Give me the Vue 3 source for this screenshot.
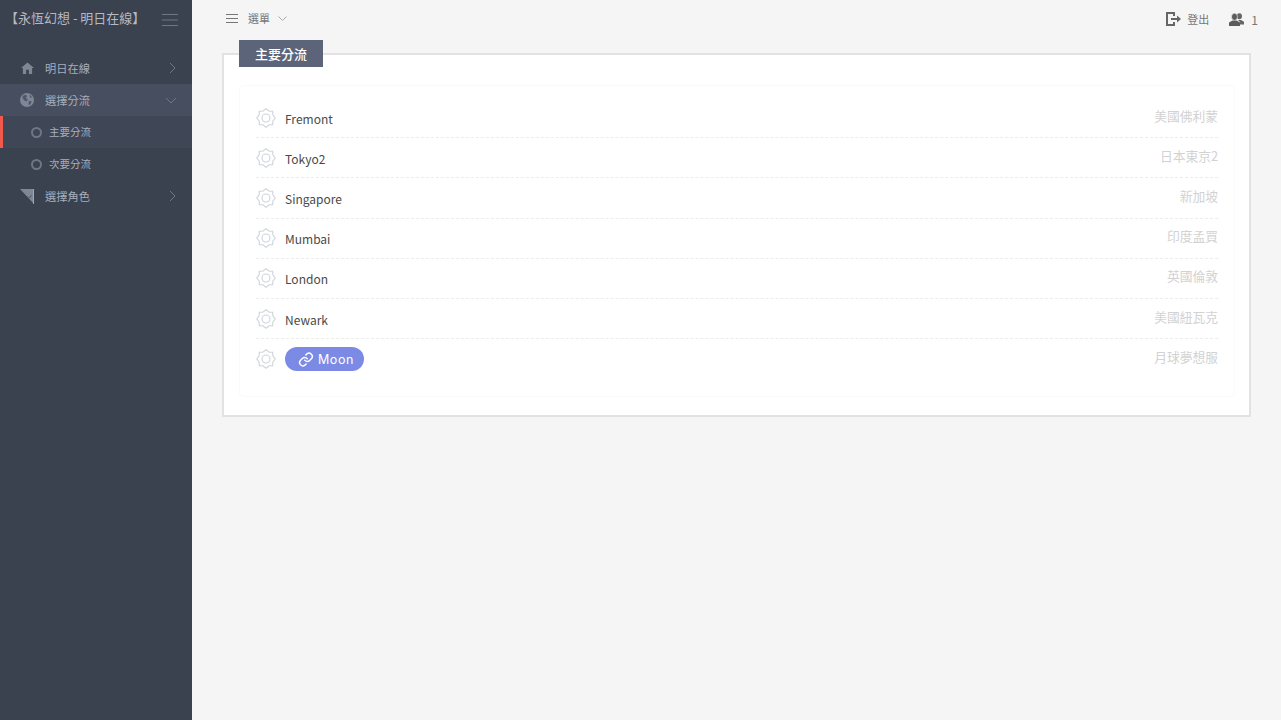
<script setup>
const rows = [
  { name: 'Fremont', place: '美國佛利蒙' },
  { name: 'Tokyo2', place: '日本東京2' },
  { name: 'Singapore', place: '新加坡' },
  { name: 'Mumbai', place: '印度孟買' },
  { name: 'London', place: '英國倫敦' },
  { name: 'Newark', place: '美國紐瓦克' },
  { name: 'Moon', place: '月球夢想服', pill: true },
]
const gear = 'M10 .8 L13.200 3.200 L16.700 3.300 L16.800 6.800 L19.200 10 L16.800 13.200 L16.700 16.700 L13.200 16.800 L10 19.200 L6.800 16.800 L3.300 16.700 L3.200 13.200 L.8 10 L3.200 6.800 L3.300 3.300 L6.800 3.200 Z'
</script>

<template>
  <div class="page">
    <aside class="side">
      <div class="brand">
        <span class="brand-text">【永恆幻想 - 明日在線】</span>
        <svg class="burger" width="16" height="12" viewBox="0 0 16 12"><path d="M0 .5H16M0 6H16M0 11.500H16" stroke="#6f7684" fill="none"/></svg>
      </div>
      <nav class="menu">
        <div class="item">
          <span class="ico-box"><svg width="13" height="12" viewBox="0 0 14 13"><path d="M7 .5 L14 6.500 H12 V13 H8.500 V8.500 H5.500 V13 H2 V6.500 H0 Z" fill="#7f8797"/></svg></span>
          <span class="label">明日在線</span>
          <svg class="arrow" width="7" height="12" viewBox="0 0 7 12"><path d="M1 1L6 6L1 11" stroke="#6f7684" fill="none"/></svg>
        </div>
        <div class="item open">
          <span class="ico-box"><svg width="14" height="14" viewBox="0 0 14 14"><circle cx="7" cy="7" r="7" fill="#7f8797"/><path d="M2.500 2.800 L6 1.800 L7 3.400 L5.800 5 L7.800 6.200 L6.800 8.200 L5 8 L2.800 5.800 Z M8.500 8.200 L11.600 8 L10.600 11 L8.800 12.300 Z M9.500 1.600 L12.400 4.400 L10 4.600 Z" fill="#4f5769"/></svg></span>
          <span class="label">選擇分流</span>
          <svg class="arrow" width="12" height="7" viewBox="0 0 12 7"><path d="M1 1L6 6L11 1" stroke="#6f7684" fill="none"/></svg>
        </div>
        <div class="sub active"><i class="ring"></i><span>主要分流</span></div>
        <div class="sub"><i class="ring"></i><span>次要分流</span></div>
        <div class="item">
          <span class="ico-box"><svg width="14" height="15" viewBox="0 0 14 15"><path d="M0 0 H14 V15 Z" fill="#7f8797"/><path d="M13.500 0 V15" stroke="#a0a6b2"/><path d="M8 7.500 L9.500 9 L11.500 6" stroke="#4f5769" fill="none"/></svg></span>
          <span class="label">選擇角色</span>
          <svg class="arrow" width="7" height="12" viewBox="0 0 7 12"><path d="M1 1L6 6L1 11" stroke="#6f7684" fill="none"/></svg>
        </div>
      </nav>
    </aside>
    <main class="main">
      <header class="top">
        <div class="top-left">
          <svg width="12" height="9" viewBox="0 0 12 9"><path d="M0 .5H12M0 4.500H12M0 8.500H12" stroke="#777" fill="none"/></svg>
          <span>選單</span>
          <svg width="9" height="5" viewBox="0 0 9 5"><path d="M.5 .5L4.500 4.500L8.500 .5" stroke="#aaa" fill="none"/></svg>
        </div>
        <div class="top-right">
          <svg width="15" height="14" viewBox="0 0 15 14"><path d="M8 4V1H1V13H8V10" stroke="#666" stroke-width="2" fill="none"/><path d="M5 6H11V3.500L15 7L11 10.500V8H5Z" fill="#666"/></svg>
          <span class="logout">登出</span>
          <svg class="users" width="15" height="13" viewBox="0 0 15 13"><ellipse cx="10.400" cy="3.300" rx="2.600" ry="3" fill="#666"/><path d="M9 7 H12 L15 8.800 V11.500 H11 V9 Z" fill="#666"/><ellipse cx="5.500" cy="3.800" rx="3" ry="3.500" fill="#5c5c5c" stroke="#f5f5f5" stroke-width=".6"/><path d="M3.500 7.500 H7.500 L11 9.500 V13 H0 V9.500 Z" fill="#5c5c5c"/></svg>
          <span class="count">1</span>
        </div>
      </header>
      <section class="card">
        <div class="tab">主要分流</div>
        <div class="panel">
          <div v-for="r in rows" :key="r.name" class="row">
            <svg class="gear" width="20" height="20" viewBox="0 0 20 20"><path :d="gear" fill="none" stroke="#cfd3dc" stroke-width="1.100"/><circle cx="10" cy="10" r="4" fill="none" stroke="#cfd3dc" stroke-width="1.100"/></svg>
            <span v-if="r.pill" class="pill">
              <svg width="17" height="17" viewBox="0 0 24 24" fill="none" stroke="#fff" stroke-width="2.200" stroke-linecap="round" stroke-linejoin="round"><path d="M10 13a5 5 0 0 0 7.500.5l3-3a5 5 0 0 0-7-7l-1.700 1.700"/><path d="M14 11a5 5 0 0 0-7.500-.5l-3 3a5 5 0 0 0 7 7l1.700-1.700"/></svg>
              {{ r.name }}
            </span>
            <span v-else class="name">{{ r.name }}</span>
            <span class="place">{{ r.place }}</span>
          </div>
        </div>
      </section>
    </main>
  </div>
</template>

<style>
html, body { margin: 0; background: #f5f5f5; }
</style>

<style scoped>
.page { display: flex; min-height: 720px; font-family: "Noto Sans CJK TC", "Noto Sans", sans-serif; }
.side { width: 192px; flex: none; background: #3a414f; color: #a8aeba; }
.brand { height: 38px; display: flex; align-items: center; justify-content: space-between; padding: 0 14px 0 6px; margin-bottom: 14px; box-sizing: border-box; }
.brand-text { font-size: 13px; color: #b4b9c3; margin: -4px 0 0 -1px; white-space: nowrap; }
.burger { margin-top: 1px; }
.menu { display: flex; flex-direction: column; }
.item { height: 32px; display: flex; align-items: center; padding: 0 15px 0 20px; font-size: 11.250px; }
.item.open { background: #464e60; }
.ico-box { width: 14px; margin-right: 11px; flex: none; display: flex; justify-content: center; }
.label { flex: 1; }
.arrow { flex: none; margin-right: 1px; }
.open .arrow { margin-right: 0; }
.sub { height: 32px; display: flex; align-items: center; padding-left: 31px; font-size: 10.500px; }
.sub span { margin-top: -2px; }
.sub.active { background: #3f4656; box-shadow: inset 3px 0 0 #f2584b; }
.ring { width: 7px; height: 7px; border: 2px solid #6f7684; border-radius: 50%; margin-right: 7px; }
.main { flex: 1; min-width: 0; padding: 0 30px; }
.top { height: 38px; display: flex; justify-content: space-between; align-items: center; font-size: 11px; color: #777; margin: 0 -7px 16px 4px; }
.top-left, .top-right { display: flex; align-items: center; }
.top-left { margin-top: -2px; }
.top-left span { margin: 0 8px 0 10px; }
.logout { margin: 0 20px 0 6px; }
.count { margin-left: 7px; font-size: 12px; }
.card { position: relative; height: 364px; margin-top: -1px; box-sizing: border-box; border: 2px solid #e2e2e2; background: #fff; padding: 30px 14px 0 15px; }
.tab { position: absolute; left: 15px; top: -15px; width: 84px; height: 27px; background: #5c6479; color: #fff; font-size: 13px; display: flex; align-items: center; justify-content: center; font-weight: 500; }
.panel { height: 312px; box-sizing: border-box; border: 1px solid #fafafa; border-radius: 4px; padding: 12px 16px 0; }
.row { height: 40.200px; display: flex; align-items: center; box-sizing: border-box; border-bottom: 1px dashed #ececec; color: #4a4a4a; font-size: 12px; }
.row:last-child { border-bottom: 0; }
.gear { margin-right: 9px; flex: none; }
.name { flex: 1; margin-top: 1px; }
.place { color: #d2d2d2; font-size: 12.750px; margin-top: -5px; }
.pill { display: inline-flex; align-items: center; gap: 4px; height: 24px; width: 79px; box-sizing: border-box; padding: 0 10px 0 13px; border-radius: 12px; background: #7b8ae4; color: #fff; font-family: Inter, sans-serif; font-size: 12.500px; letter-spacing: .6px; margin: 0 auto 0 0; }
</style>
